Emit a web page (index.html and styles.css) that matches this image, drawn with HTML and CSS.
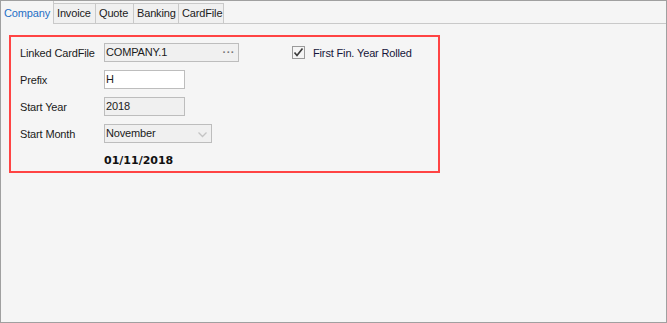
FILE: index.html
```html
<!DOCTYPE html>
<html>
<head>
<meta charset="utf-8">
<link rel="stylesheet" href="styles.css">
</head>
<body>
<div class="window">
  <div class="tabs">
    <div class="tab active">Company</div>
    <div class="tab t-invoice">Invoice</div>
    <div class="tab t-quote">Quote</div>
    <div class="tab t-banking">Banking</div>
    <div class="tab t-cardfile">CardFile</div>
    <div class="tab-fill"></div>
  </div>
  <div class="panel">
    <div class="group">
      <div class="row">
        <div class="label">Linked CardFile</div>
        <div class="field ro wide">COMPANY.1<span class="dots">&middot;&middot;&middot;</span></div>
        <div class="check-wrap">
          <span class="checkbox">
            <svg width="11" height="11" viewBox="0 0 11 11"><path d="M1.5 5.5 L4 8.5 L9.5 1.5" fill="none" stroke="#3c3c3c" stroke-width="1.7"/></svg>
          </span>
          <span class="check-label">First Fin. Year Rolled</span>
        </div>
      </div>
      <div class="row">
        <div class="label">Prefix</div>
        <div class="field short">H</div>
      </div>
      <div class="row">
        <div class="label">Start Year</div>
        <div class="field ro short">2018</div>
      </div>
      <div class="row">
        <div class="label">Start Month</div>
        <div class="field ro combo">November
          <svg class="chev" width="9" height="6" viewBox="0 0 9 6"><path d="M0.5 0.5 L4.5 4.5 L8.5 0.5" fill="none" stroke="#c4c4c4" stroke-width="1.3"/></svg>
        </div>
      </div>
      <div class="row date-row">
        <div class="label"></div>
        <div class="date">01/11/2018</div>
      </div>
    </div>
  </div>
</div>
</body>
</html>
```
FILE: styles.css
```css
html, body {
  margin: 0;
  padding: 0;
}
body {
  font-family: "Liberation Sans", Arial, sans-serif;
  font-size: 11px;
  letter-spacing: -0.15px;
  color: #1b1b1b;
  background: #f5f5f5;
}
.window {
  width: 667px;
  height: 323px;
  box-sizing: border-box;
  border: 1px solid #a0a0a0;
  background: #f5f5f5;
}
.tabs {
  display: flex;
  height: 22px;
  border-bottom: 1px solid #c9c9c9;
}
.tab {
  box-sizing: border-box;
  height: 20px;
  margin-top: 2px;
  border-top: 1px solid #c9c9c9;
  border-right: 1px solid #c9c9c9;
  background: #f0f0f0;
  padding: 0 3px;
  line-height: 19px;
  color: #1b1b1b;
}
.tab.active {
  height: 23px;
  margin-top: 0;
  margin-bottom: -1px;
  border-top: none;
  background: #f5f5f5;
  color: #1f6fc5;
  width: 53px;
  line-height: 24px;
}
.t-invoice { width: 42px; }
.t-quote { width: 38px; }
.t-banking { width: 45px; }
.t-cardfile { width: 45px; }
.tab-fill { flex: 1; }
.panel {
  padding: 11px 0 0 8px;
}
.group {
  width: 431px;
  height: 138px;
  box-sizing: border-box;
  border: 2px solid #ff4444;
  padding: 6px 0 0 9px;
}
.row {
  display: flex;
  align-items: center;
  height: 19px;
  margin-bottom: 8px;
}
.label {
  width: 84px;
  flex: none;
}
.field {
  box-sizing: border-box;
  height: 19px;
  border: 1px solid #bdbdbd;
  background: #ffffff;
  padding: 0 0 0 1px;
  line-height: 17px;
  position: relative;
}
.field.ro {
  background: #f0f0f0;
}
.wide { width: 135px; }
.short { width: 81px; }
.combo { width: 108px; }
.dots {
  position: absolute;
  right: 3px;
  top: 0;
  color: #777;
  letter-spacing: 0.5px;
  font-weight: bold;
}
.chev {
  position: absolute;
  right: 4px;
  top: 7px;
}
.check-wrap {
  display: flex;
  align-items: center;
  margin-left: 53px;
}
.checkbox {
  box-sizing: border-box;
  width: 13px;
  height: 13px;
  border: 1px solid #9a9a9a;
  background: #f5f5f5;
  display: flex;
  align-items: center;
  justify-content: center;
}
.check-label {
  margin-left: 8px;
  color: #15153a;
}
.date-row {
  margin-top: 3px;
}
.date {
  font-family: "DejaVu Sans", Verdana, sans-serif;
  font-weight: bold;
  font-size: 11px;
  letter-spacing: 0;
  color: #111;
}
```
